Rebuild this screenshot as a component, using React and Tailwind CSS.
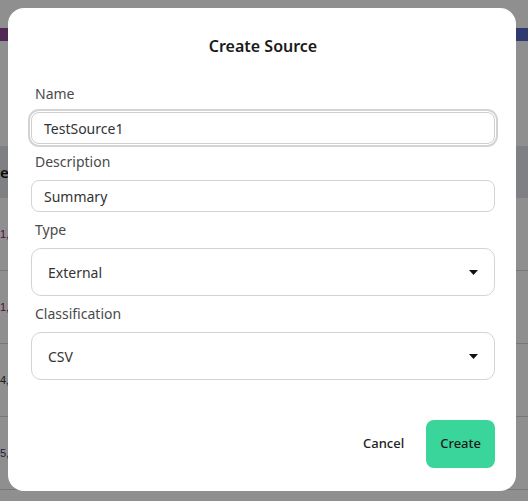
import React from "react";

const font = { fontFamily: '"Noto Sans", "Open Sans", sans-serif' };

function Caret() {
  return (
    <svg width="9" height="5" viewBox="0 0 9 5" className="shrink-0">
      <path d="M0 0H9L4.5 5Z" fill="#111" />
    </svg>
  );
}

function Field({ label, children, className = "" }) {
  return (
    <div className={"flex flex-col " + className}>
      <label className="h-5 leading-5 text-[14px] text-[#4a4a4a] pl-1 mb-2">{label}</label>
      {children}
    </div>
  );
}

function BgRow({ text, color }) {
  return (
    <div className="h-[73px] border-b border-[#d7d7d7] flex items-center">
      <span
        className={"whitespace-nowrap text-[11px] " + color}
        style={{ fontFamily: '"Liberation Sans", sans-serif' }}
      >
        {text}
      </span>
    </div>
  );
}

export default function App() {
  return (
    <div className="relative w-full h-[501px] overflow-hidden bg-white" style={font}>
      {/* background page */}
      <div className="flex flex-col">
        <div className="h-[28px]" />
        <div className="h-[13px] bg-gradient-to-r from-[#904899] to-[#5368c5]" />
        <div className="h-[105px]" />
        <div className="h-[52px] bg-[#e2e4e9] flex items-center">
          <span className="whitespace-nowrap text-[15px] font-semibold text-[#111]">e</span>
        </div>
        <BgRow text="1," color="text-[#8a1a6a]" />
        <BgRow text="1," color="text-[#8a1a6a]" />
        <BgRow text="4," color="text-[#333]" />
        <BgRow text="5," color="text-[#2a3a7a]" />
      </div>

      {/* overlay */}
      <div className="absolute inset-0 bg-black/[0.44] pl-2 pr-3 pt-2 pb-[10px] flex">
        <div className="flex-1 bg-white rounded-2xl pl-[23px] pr-[21px] pb-[23px] pt-[26px] flex flex-col">
          <h2 className="text-center text-[16px] leading-6 font-semibold text-[#1a1a1a]">Create Source</h2>
          <div className="mt-[26px] flex flex-col">
            <Field label="Name">
              <input
                readOnly
                value="TestSource1"
                className="h-8 rounded-lg border border-[#cfcfcf] outline-2 outline-offset-1 outline-[#d3d3d3] outline px-3 text-[14px] text-[#333]"
                style={font}
              />
            </Field>
            <Field label="Description" className="mt-2">
              <input
                readOnly
                value="Summary"
                className="h-8 rounded-lg border border-[#d3d3d3] px-3 text-[14px] text-[#333] outline-none"
                style={font}
              />
            </Field>
            <Field label="Type" className="mt-2">
              <div className="h-12 rounded-[10px] border border-[#d3d3d3] flex items-center justify-between pl-4 pr-4">
                <span className="text-[14px] text-[#333]">External</span>
                <Caret />
              </div>
            </Field>
            <Field label="Classification" className="mt-2">
              <div className="h-12 rounded-[10px] border border-[#d3d3d3] flex items-center justify-between pl-4 pr-4">
                <span className="text-[14px] text-[#333]">CSV</span>
                <Caret />
              </div>
            </Field>
          </div>
          <div className="mt-auto flex justify-end items-center gap-[6px]">
            <button className="h-12 px-4 text-[13px] font-medium text-[#222]">Cancel</button>
            <button className="h-12 px-[14px] rounded-lg bg-[#3ad59a] text-[13px] font-medium text-[#1a1a1a]">Create</button>
          </div>
        </div>
      </div>
    </div>
  );
}
